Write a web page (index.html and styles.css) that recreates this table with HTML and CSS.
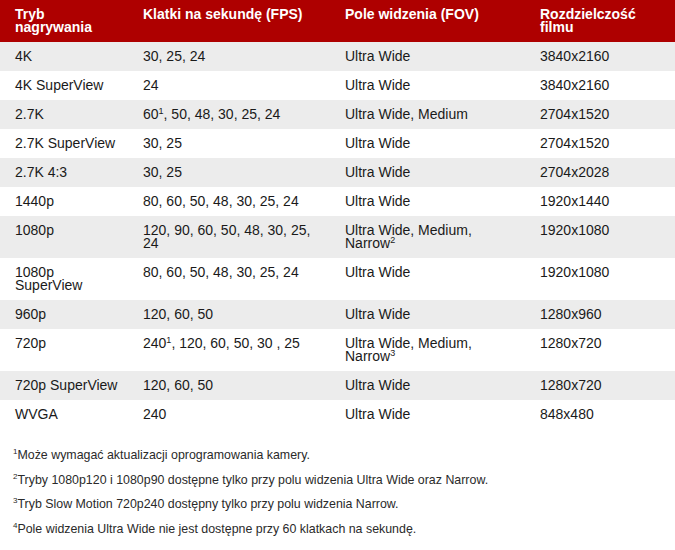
FILE: index.html
```html
<!DOCTYPE html>
<html lang="pl">
<head>
<meta charset="utf-8">
<link rel="stylesheet" href="styles.css">
</head>
<body>
<table class="specs">
  <colgroup>
    <col class="c1"><col class="c2"><col class="c3"><col class="c4">
  </colgroup>
  <thead>
    <tr><th>Tryb nagrywania</th><th>Klatki na sekundę (FPS)</th><th>Pole widzenia (FOV)</th><th>Rozdzielczość filmu</th></tr>
  </thead>
  <tbody>
    <tr><td>4K</td><td>30, 25, 24</td><td>Ultra Wide</td><td>3840x2160</td></tr>
    <tr><td>4K SuperView</td><td>24</td><td>Ultra Wide</td><td>3840x2160</td></tr>
    <tr><td>2.7K</td><td>60<sup>1</sup>, 50, 48, 30, 25, 24</td><td>Ultra Wide, Medium</td><td>2704x1520</td></tr>
    <tr><td>2.7K SuperView</td><td>30, 25</td><td>Ultra Wide</td><td>2704x1520</td></tr>
    <tr><td>2.7K 4:3</td><td>30, 25</td><td>Ultra Wide</td><td>2704x2028</td></tr>
    <tr><td>1440p</td><td>80, 60, 50, 48, 30, 25, 24</td><td>Ultra Wide</td><td>1920x1440</td></tr>
    <tr><td>1080p</td><td>120, 90, 60, 50, 48, 30, 25, 24</td><td>Ultra Wide, Medium, Narrow<sup>2</sup></td><td>1920x1080</td></tr>
    <tr><td>1080p SuperView</td><td>80, 60, 50, 48, 30, 25, 24</td><td>Ultra Wide</td><td>1920x1080</td></tr>
    <tr><td>960p</td><td>120, 60, 50</td><td>Ultra Wide</td><td>1280x960</td></tr>
    <tr><td>720p</td><td>240<sup>1</sup>, 120, 60, 50, 30 , 25</td><td>Ultra Wide, Medium, Narrow<sup>3</sup></td><td>1280x720</td></tr>
    <tr><td>720p SuperView</td><td>120, 60, 50</td><td>Ultra Wide</td><td>1280x720</td></tr>
    <tr><td>WVGA</td><td>240</td><td>Ultra Wide</td><td>848x480</td></tr>
  </tbody>
</table>
<div class="notes">
  <p><sup>1</sup>Może wymagać aktualizacji oprogramowania kamery.</p>
  <p><sup>2</sup>Tryby 1080p120 i 1080p90 dostępne tylko przy polu widzenia Ultra Wide oraz Narrow.</p>
  <p><sup>3</sup>Tryb Slow Motion 720p240 dostępny tylko przy polu widzenia Narrow.</p>
  <p><sup>4</sup>Pole widzenia Ultra Wide nie jest dostępne przy 60 klatkach na sekundę.</p>
</div>
</body>
</html>
```
FILE: styles.css
```css
html, body {
  margin: 0;
  padding: 0;
  background: #ffffff;
}
body {
  font-family: "Liberation Sans", Arial, sans-serif;
  color: #1a1a1a;
  width: 675px;
}
.specs {
  width: 675px;
  border-collapse: collapse;
  table-layout: fixed;
  font-size: 14px;
  line-height: 13px;
}
.c1 { width: 128px; }
.c2 { width: 202px; }
.c3 { width: 195px; }
.c4 { width: 150px; }
.specs th,
.specs td {
  padding: 8px 5px 8px 15px;
  text-align: left;
  vertical-align: top;
}
.specs th {
  background: #ae0000;
  color: #ffffff;
  font-weight: bold;
}
.specs tbody tr:nth-child(odd) td {
  background: #ececec;
}
.specs sup {
  font-size: 9px;
  line-height: 0;
  vertical-align: 5px;
}
.notes {
  padding: 19px 0 0 13px;
  font-size: 12.4px;
  color: #2a2a2a;
}
.notes p {
  margin: 0 0 10px;
  line-height: 14.5px;
}
.notes sup {
  font-size: 8px;
  line-height: 0;
  vertical-align: 5px;
}
```
